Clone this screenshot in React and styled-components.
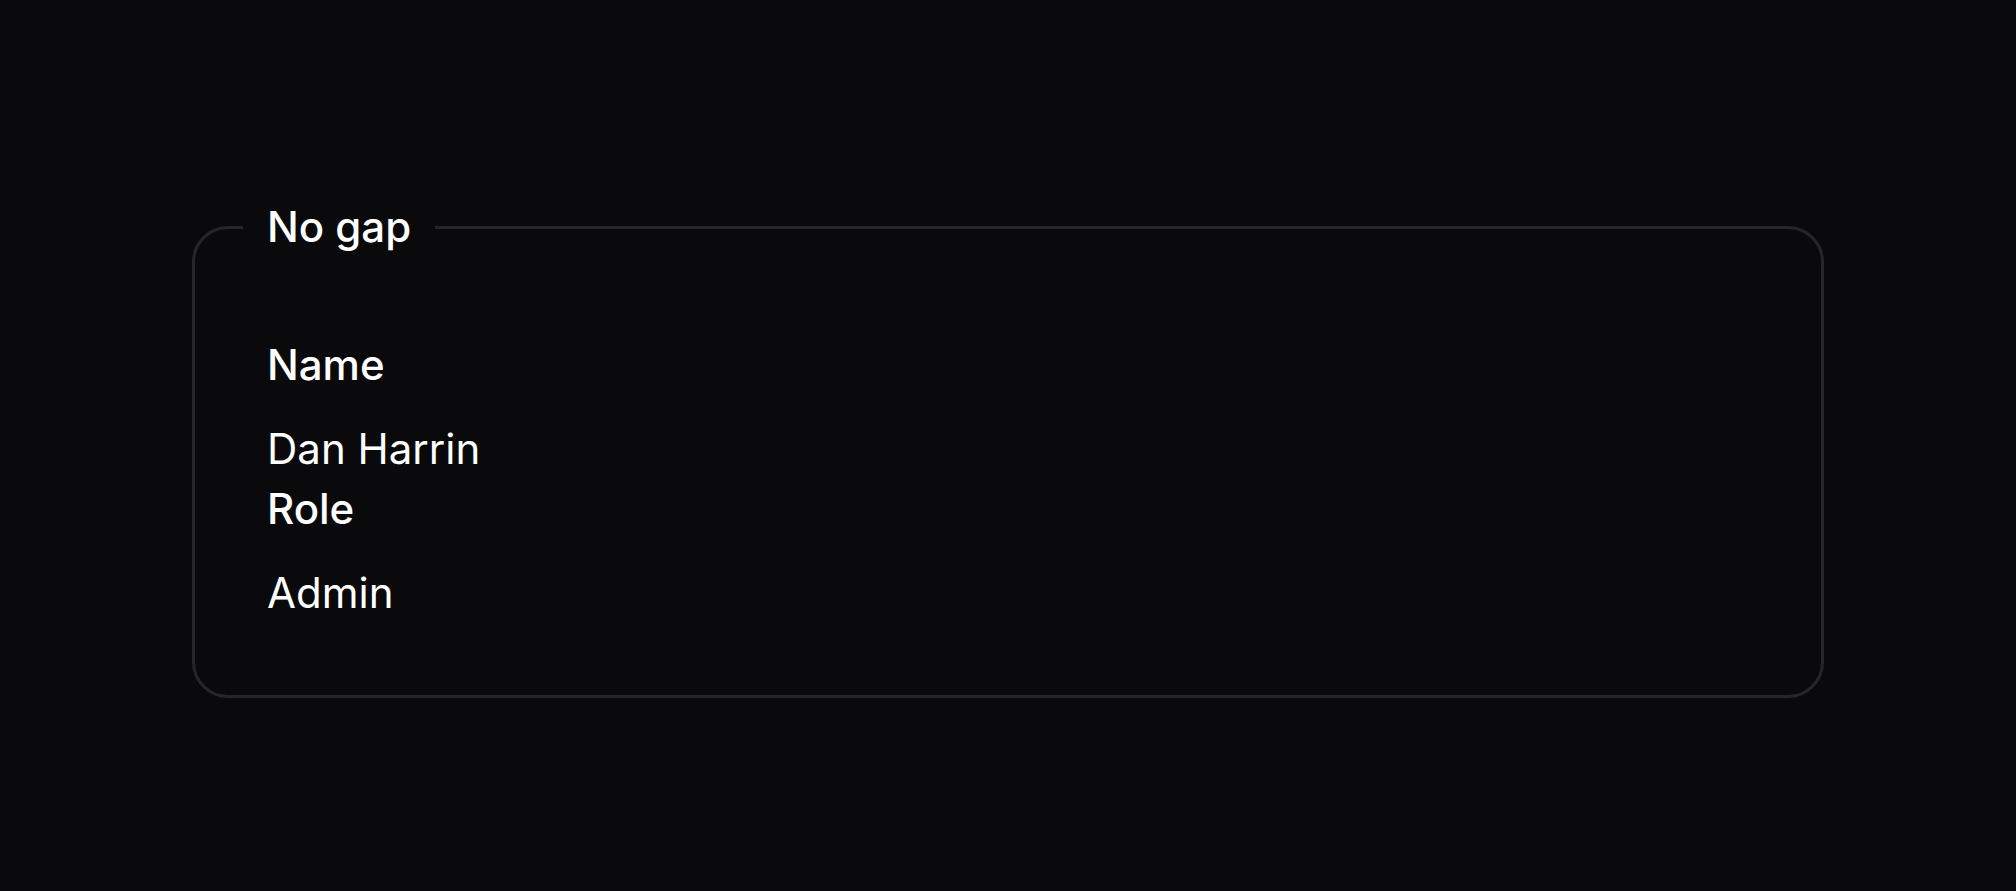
import styled, { createGlobalStyle } from "styled-components";

const GlobalStyle = createGlobalStyle`
  html, body {
    margin: 0;
    padding: 0;
    background-color: #0a0a0c;
  }
  body {
    font-family: Inter, "Noto Sans", sans-serif;
    color: #ffffff;
    -webkit-font-smoothing: antialiased;
  }
`;

const entries = [
  { label: "Name", value: "Dan Harrin" },
  { label: "Role", value: "Admin" },
];

const App = () => {
  return (
    <Page>
      <GlobalStyle />
      <Fieldset>
        <Legend>No gap</Legend>
        <EntryList>
          {entries.map((entry) => (
            <Entry key={entry.label}>
              <EntryLabel>{entry.label}</EntryLabel>
              <EntryValue>{entry.value}</EntryValue>
            </Entry>
          ))}
        </EntryList>
      </Fieldset>
    </Page>
  );
};

const Page = styled.div`
  min-height: 891px;
  box-sizing: border-box;
  padding: 191px 192px 0 192px;
  background-color: #0a0a0c;
`;

const Fieldset = styled.fieldset`
  margin: 0;
  min-width: 0;
  border: 3px solid #262628;
  border-radius: 36px;
  padding: 72px;
`;

const Legend = styled.legend`
  margin-left: -24px;
  padding: 0 24px;
  font-size: 42px;
  font-weight: 500;
  line-height: 72px;
  color: #ffffff;
`;

const EntryList = styled.div`
  display: grid;
  grid-template-columns: 1fr;
  gap: 0;
`;

const Entry = styled.div`
  display: flex;
  flex-direction: column;
  gap: 24px;
`;

const EntryLabel = styled.div`
  font-size: 42px;
  font-weight: 500;
  line-height: 60px;
  color: #ffffff;
`;

const EntryValue = styled.div`
  font-size: 42px;
  font-weight: 400;
  line-height: 60px;
  color: #ffffff;
`;

export default App;
